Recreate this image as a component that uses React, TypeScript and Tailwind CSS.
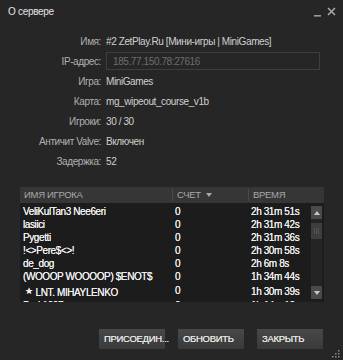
import React from "react";

const rows: { name: string; score: string; time: string; star?: boolean }[] = [
  { name: "VeliKulTan3 Nee6eri", score: "0", time: "2h 31m 51s" },
  { name: "lasiici", score: "0", time: "2h 31m 42s" },
  { name: "Pygetti", score: "0", time: "2h 31m 36s" },
  { name: "!<>Pere$<>!", score: "0", time: "2h 30m 58s" },
  { name: "de_dog", score: "0", time: "2h 6m 8s" },
  { name: "(WOOOP WOOOOP) $ENOT$", score: "0", time: "1h 34m 44s" },
];

function Info({ label, children }: { label: string; children: React.ReactNode }) {
  return (
    <>
      <div className="h-[20px] flex items-center justify-end text-[#b0b0b0]">{label}</div>
      <div className="h-[20px] flex items-center text-[#d0d0d0]">{children}</div>
    </>
  );
}

export default function App() {
  return (
    <div
      className="w-[343px] h-[360px] bg-[#262626] flex flex-col relative overflow-hidden"
      style={{ fontFamily: '"Liberation Sans", Arial, sans-serif' }}
    >
      {/* Title bar */}
      <div className="h-[22px] flex items-center pl-[8px] pr-[7px] pt-[1px]">
        <div className="text-[10px] tracking-[-0.3px] text-[#e4e4e4] flex-1">О сервере</div>
        <div className="flex items-center gap-[5px]">
          <svg width="8" height="8" viewBox="0 0 8 8" className="mt-[2px]">
            <rect x="0" y="6" width="7" height="1.6" fill="#9a9a9a" />
          </svg>
          <svg width="9" height="9" viewBox="0 0 9 9">
            <path d="M1 1 L8 8 M8 1 L1 8" stroke="#a8a8a8" strokeWidth="1.6" />
          </svg>
        </div>
      </div>

      {/* Info grid */}
      <div className="grid grid-cols-[94px_1fr] gap-x-[5px] pl-[7px] pr-[23px] mt-[9px] text-[10px] tracking-[-0.4px]">
        <Info label="Имя:">#2 ZetPlay.Ru [Мини-игры | MiniGames]</Info>
        <Info label="IP-адрес:">
          <div className="w-[214px] h-[18px] border border-[#3e3e3e] bg-[#262626] flex items-center pl-[6px] text-[#6e6e6e]">
            185.77.150.78:27616
          </div>
        </Info>
        <Info label="Игра:">MiniGames</Info>
        <Info label="Карта:">mg_wipeout_course_v1b</Info>
        <Info label="Игроки:">30 / 30</Info>
        <Info label="Античит Valve:">Включен</Info>
        <Info label="Задержка:">52</Info>
      </div>

      {/* Table */}
      <div className="mx-[20px] mt-[16px] w-[304px]">
        <div className="h-[16px] bg-[#363636] flex items-center text-[9.5px] tracking-[-0.3px] text-[#a8a8a8] uppercase">
          <div className="w-[152px] pl-[4px]">ИМЯ ИГРОКА</div>
          <div className="w-[1px] h-[12px] bg-[#4a4a4a]" />
          <div className="w-[75px] pl-[4px] flex items-center gap-[5px]">
            СЧЕТ
            <svg width="6" height="4" viewBox="0 0 6 4">
              <path d="M0 0 L6 0 L3 4 Z" fill="#a8a8a8" />
            </svg>
          </div>
          <div className="w-[1px] h-[12px] bg-[#4a4a4a]" />
          <div className="pl-[4px]">ВРЕМЯ</div>
        </div>
        <div className="h-[99px] bg-[#1c1c1c] flex relative overflow-hidden">
          <div className="flex-1 pt-[2px] text-[10px] tracking-[-0.4px] text-[#f0f0f0] [text-shadow:0_0_0.4px_#f0f0f0]">
            {rows.map((r, i) => (
              <div key={i} className="h-[13px] flex items-center">
                <div className="w-[152px] pl-[3px] whitespace-nowrap">{r.name}</div>
                <div className="w-[79px] pl-[3px]">{r.score}</div>
                <div>{r.time}</div>
              </div>
            ))}
            <div className="h-[16px] flex items-center">
              <div className="w-[152px] pl-[5px] whitespace-nowrap flex items-center gap-[3px] pt-[2px]">
                <span className="text-[9px]">★</span>LNT. MIHAYLENKO
              </div>
              <div className="w-[79px] pl-[3px] pb-[2px]">0</div>
              <div>1h 30m 39s</div>
            </div>
            <div className="h-[13px] flex items-center">
              <div className="w-[152px] pl-[3px] whitespace-nowrap">Dark1997</div>
              <div className="w-[79px] pl-[3px]">0</div>
              <div>1h 14m 12s</div>
            </div>
          </div>
          {/* Scrollbar */}
          <div className="w-[11px] mr-[2px] mt-[3px] mb-[3px] bg-[#242424] flex flex-col">
            <div className="h-[13px] bg-[#4a4a4a] flex items-center justify-center">
              <svg width="6" height="4" viewBox="0 0 6 4">
                <path d="M0 4 L6 4 L3 0 Z" fill="#c8c8c8" />
              </svg>
            </div>
            <div className="h-[16px] mt-[4px] bg-[#3e3e3e] flex items-center justify-center">
              <svg width="6" height="6" viewBox="0 0 6 6">
                <path d="M0 1 H6 M0 3 H6 M0 5 H6" stroke="#6a6a6a" strokeWidth="1" strokeDasharray="1 1" />
              </svg>
            </div>
            <div className="flex-1" />
            <div className="h-[13px] bg-[#4a4a4a] flex items-center justify-center">
              <svg width="6" height="4" viewBox="0 0 6 4">
                <path d="M0 0 L6 0 L3 4 Z" fill="#c8c8c8" />
              </svg>
            </div>
          </div>
        </div>
      </div>

      {/* Buttons */}
      <div className="flex justify-end gap-[13px] pr-[20px] mt-[27px]">
        {["ПРИСОЕДИН...", "ОБНОВИТЬ", "ЗАКРЫТЬ"].map((t) => (
          <div
            key={t}
            className="w-[66px] h-[20px] bg-gradient-to-b from-[#484848] to-[#3a3a3a] flex items-center pl-[5px] text-[9.5px] tracking-[-0.3px] text-[#e4e4e4] [text-shadow:0_0_0.4px_#e4e4e4]"
          >
            {t}
          </div>
        ))}
      </div>

      {/* Resize grip */}
      <svg width="8" height="8" viewBox="0 0 8 8" className="absolute right-[3px] bottom-[2px]">
        <rect x="6" y="0" width="1.5" height="1.5" fill="#8a8a8a" />
        <rect x="3" y="3" width="1.5" height="1.5" fill="#8a8a8a" />
        <rect x="6" y="3" width="1.5" height="1.5" fill="#8a8a8a" />
        <rect x="0" y="6" width="1.5" height="1.5" fill="#8a8a8a" />
        <rect x="3" y="6" width="1.5" height="1.5" fill="#8a8a8a" />
        <rect x="6" y="6" width="1.5" height="1.5" fill="#8a8a8a" />
      </svg>
    </div>
  );
}
